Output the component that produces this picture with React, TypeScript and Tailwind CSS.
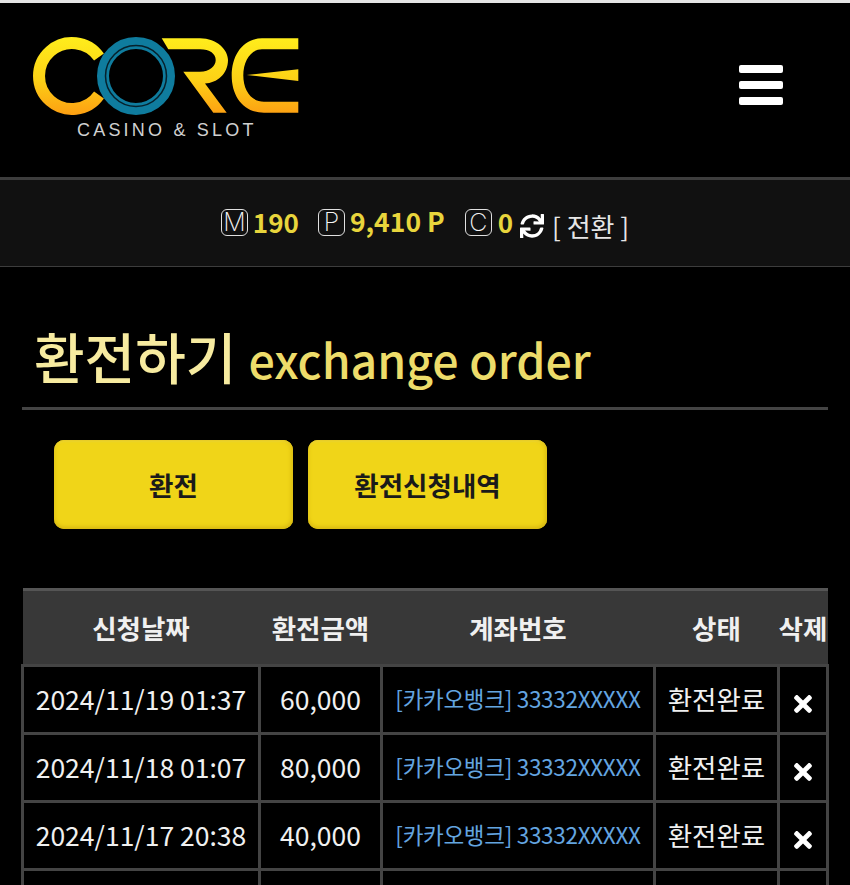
import { FaSync, FaTimes } from "react-icons/fa";

const rows = [
  { date: "2024/11/19 01:37", amount: "60,000" },
  { date: "2024/11/18 01:07", amount: "80,000" },
  { date: "2024/11/17 20:38", amount: "40,000" },
];

const font = "font-['Noto_Sans_CJK_KR','Noto_Sans',sans-serif]";
const btn =
  "h-[89px] w-[239px] rounded-[10px] bg-[#f0d518] text-[26.500px] font-bold text-[#1a1a1a] shadow-[inset_0_-2px_4px_#d8b812,inset_-2px_0_4px_#e0c414,inset_0_2px_2px_#f3dc3c]";
const cell = "border-[3px] border-[#444444] pb-[2px] text-center whitespace-nowrap";

function Logo() {
  return (
    <svg width="270" height="82" viewBox="33 35 270 82" fill="none">
      <defs>
        <linearGradient id="gold" gradientUnits="userSpaceOnUse" x1="0" y1="36" x2="0" y2="115">
          <stop offset="0" stopColor="#ffee1c" />
          <stop offset="0.55" stopColor="#fcd116" />
          <stop offset="1" stopColor="#fd9f12" />
        </linearGradient>
      </defs>
      <path d="M99 57 A33 33 0 1 0 99 95" stroke="url(#gold)" strokeWidth="12" />
      <path
        d="M161.700 38.300 H200 C217 38.300 228 50 228 60 C228 74 217 83 205 83.500 L226.700 112.700 H213.300 L183.300 71.700 H200 C210 71.700 215.700 66 215.700 60 C215.700 54 210 49.300 200 49.300 H168.300 Z"
        fill="url(#gold)"
      />
      <path
        d="M298.300 38.300 H262 C243 38.300 231.700 55 231.700 75.500 C231.700 96 243 112.700 264 112.700 H298.300 V101.700 H264 C251 101.700 243.300 90 243.300 75.500 C243.300 61 251 49.300 262 49.300 H298.300 Z"
        fill="url(#gold)"
      />
      <path d="M246.700 75 L298.300 69.300 V81 Z" fill="url(#gold)" />
      <circle cx="136" cy="76" r="33" stroke="#0f7c9e" strokeWidth="12" />
      <circle cx="136" cy="76" r="30.500" stroke="#06212c" strokeWidth="1.500" />
    </svg>
  );
}

function Coin({ letter }: { letter: string }) {
  return (
    <span className="mb-[2px] flex h-[27px] w-[27px] shrink-0 items-center justify-center rounded-[6px] border-[1.500px] border-[#e0e0e0] font-['Inter',sans-serif] text-[25px] leading-none font-extralight text-[#f4f4f4]">
      {letter}
    </span>
  );
}

export default function App() {
  return (
    <div className={`h-[885px] w-[850px] overflow-hidden bg-black ${font}`}>
      <div className="h-[3px] bg-[#e4e4e4]" />

      <header className="flex h-[174px] items-start justify-between pr-[67px] pl-[33px]">
        <div className="flex flex-col pt-[32px]">
          <Logo />
          <div className="mt-[3px] ml-[44px] font-['Liberation_Sans',sans-serif] text-[18px] leading-[20px] tracking-[3.200px] whitespace-nowrap text-[#d0d0d0]">
            CASINO &amp; SLOT
          </div>
        </div>
        <div className="mt-[62px] flex w-[44px] flex-col gap-[8px]">
          <span className="h-[8px] rounded-[2px] bg-white" />
          <span className="h-[8px] rounded-[2px] bg-white" />
          <span className="h-[8px] rounded-[2px] bg-white" />
        </div>
      </header>

      <div className="flex h-[90px] items-center justify-center border-t-[3px] border-b border-t-[#3d3d3d] border-b-[#3d3d3d] bg-[#111111]">
        <Coin letter="M" />
        <span className="mb-[4px] ml-[5px] text-[26px] font-bold text-[#e8d53c]">190</span>
        <span className="ml-[19px]">
          <Coin letter="P" />
        </span>
        <span className="mb-[4px] ml-[5px] text-[26.500px] font-bold text-[#e8d53c]">9,410 P</span>
        <span className="ml-[20px]">
          <Coin letter="C" />
        </span>
        <span className="mb-[4px] ml-[6px] text-[26px] font-bold text-[#e8d53c]">0</span>
        <FaSync className="mt-[6px] ml-[7px] text-[24px] text-white" />
        <span className="mt-[5px] ml-[8px] text-[26px] text-[#e6e6e6]">[ 전환 ]</span>
      </div>

      <div className="mx-[22px]">
        <h1 className="flex h-[143px] items-baseline border-b-[3px] border-[#444444] pt-[48px] pl-[12px] leading-[80px]">
          <span className="text-[55px] font-medium text-[#f7eba0]">환전하기</span>
          <span className="ml-[12px] text-[46.500px] font-medium text-[#eddc6a]">exchange order</span>
        </h1>

        <div className="mt-[30px] flex gap-[15px] pl-[32px]">
          <button className={btn}>환전</button>
          <button className={btn}>환전신청내역</button>
        </div>

        <table className="mt-[59px] -ml-[1px] w-[805px] table-fixed border-collapse text-[26.500px] text-[#f0f0f0]">
          <colgroup>
            <col className="w-[237px]" />
            <col className="w-[122px]" />
            <col className="w-[273px]" />
            <col className="w-[124px]" />
            <col className="w-[49px]" />
          </colgroup>
          <thead>
            <tr className="h-[76px] border-t-[3px] border-[#555555] bg-[#383838]">
              <th className="font-bold">신청날짜</th>
              <th className="font-bold">환전금액</th>
              <th className="font-bold">계좌번호</th>
              <th className="font-bold">상태</th>
              <th className="font-bold whitespace-nowrap">삭제</th>
            </tr>
          </thead>
          <tbody>
            {rows.map((row) => (
              <tr key={row.date} className="h-[68px]">
                <td className={cell}>{row.date}</td>
                <td className={cell}>{row.amount}</td>
                <td className={`${cell} text-[22.500px] tracking-[-0.300px] text-[#64a5e0]`}>
                  [카카오뱅크] 33332XXXXX
                </td>
                <td className={cell}>환전완료</td>
                <td className="border-[3px] border-[#444444]">
                  <FaTimes className="mx-auto mt-[8px] text-[26px] text-white" />
                </td>
              </tr>
            ))}
            <tr className="h-[68px]">
              <td className={cell} />
              <td className={cell} />
              <td className={cell} />
              <td className={cell} />
              <td className={cell} />
            </tr>
          </tbody>
        </table>
      </div>
    </div>
  );
}
